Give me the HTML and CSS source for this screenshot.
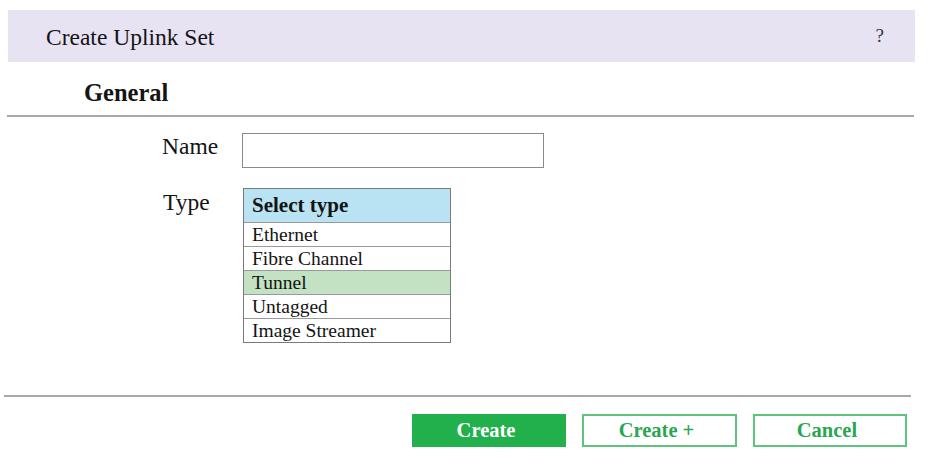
FILE: index.html
```html
<!DOCTYPE html>
<html>
<head>
<meta charset="utf-8">
<link rel="stylesheet" href="styles.css">
</head>
<body>
<div class="dialog">
  <header class="titlebar">
    <span class="title">Create Uplink Set</span>
    <span class="help">?</span>
  </header>
  <div class="section-head">General</div>
  <div class="rule rule-top"></div>
  <div class="fields">
    <div class="row row-name">
      <label class="label">Name</label>
      <input class="text-input" type="text">
    </div>
    <div class="row row-type">
      <label class="label">Type</label>
      <div class="select">
        <div class="select-head">Select type</div>
        <div class="option">Ethernet</div>
        <div class="option">Fibre Channel</div>
        <div class="option option-active">Tunnel</div>
        <div class="option">Untagged</div>
        <div class="option">Image Streamer</div>
      </div>
    </div>
  </div>
  <div class="rule rule-bottom"></div>
  <div class="footer">
    <button class="btn btn-primary">Create</button>
    <button class="btn btn-outline btn-wide">Create +</button>
    <button class="btn btn-outline">Cancel</button>
  </div>
</div>
</body>
</html>
```
FILE: styles.css
```css
html, body {
  margin: 0;
  padding: 0;
  background: #ffffff;
}
body {
  font-family: "Liberation Serif", "Times New Roman", serif;
  color: #141414;
  width: 936px;
  height: 469px;
  overflow: hidden;
}
.dialog {
  padding-top: 10px;
}
.titlebar {
  margin: 0 21px 0 8px;
  height: 52px;
  background: #e7e3f3;
  display: flex;
  align-items: center;
  justify-content: space-between;
  padding: 0 31px 0 38px;
  box-sizing: border-box;
}
.title {
  font-size: 23.5px;
  padding-top: 2px;
}
.help {
  font-size: 19px;
  color: #333344;
}
.section-head {
  height: 53px;
  box-sizing: border-box;
  padding: 17px 0 0 84px;
  font-weight: bold;
  font-size: 24.5px;
}
.rule {
  height: 0;
  border-top: 2px solid #a8a8a8;
}
.rule-top {
  margin: 0 22px 0 7px;
}
.rule-bottom {
  margin: 0 25px 0 4px;
}
.fields {
  padding: 16px 0 52px 162px;
  display: flex;
  flex-direction: column;
  gap: 21px;
}
.row {
  display: flex;
  align-items: flex-start;
}
.label {
  width: 80px;
  font-size: 23.5px;
}
.row-type .label {
  width: 81px;
  padding-left: 1px;
  box-sizing: border-box;
}
.text-input {
  width: 302px;
  height: 35px;
  box-sizing: border-box;
  border: 1px solid #8a8a8a;
  margin: 0;
  padding: 0;
  background: #fff;
}
.select {
  width: 208px;
  border: 1px solid #7a7a7a;
  box-sizing: border-box;
  margin-top: -1px;
}
.select-head {
  height: 33px;
  background: #b9e2f2;
  font-weight: bold;
  font-size: 21px;
  line-height: 33px;
  padding-left: 8px;
}
.option {
  height: 24px;
  box-sizing: border-box;
  border-top: 1px solid #9a9a9a;
  font-size: 19.5px;
  line-height: 24px;
  padding-left: 8px;
}
.option-active {
  background: #c3e1c3;
}
.footer {
  display: flex;
  justify-content: flex-end;
  gap: 16px;
  padding: 17px 29px 0 0;
}
.btn {
  height: 33px;
  width: 154px;
  box-sizing: border-box;
  font-family: "Liberation Serif", "Times New Roman", serif;
  font-weight: bold;
  font-size: 20.5px;
  margin: 0;
  padding: 0 6px 1px 0;
  cursor: pointer;
}
.btn-wide {
  width: 155px;
}
.btn-primary {
  background: #22b04c;
  color: #ffffff;
  border: 2px solid #22b04c;
}
.btn-outline {
  background: #ffffff;
  color: #2aa652;
  border: 2px solid #5ec37c;
}
```
